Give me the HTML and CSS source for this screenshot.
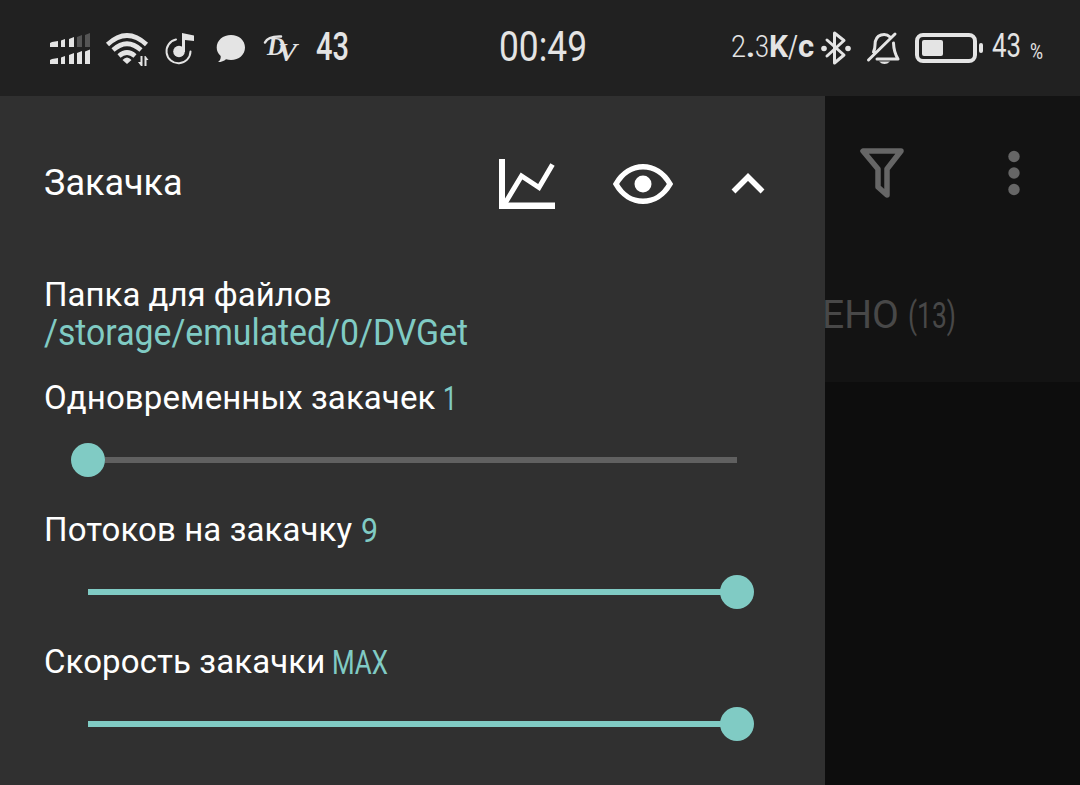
FILE: index.html
```html
<!DOCTYPE html>
<html lang="ru">
<head>
<meta charset="utf-8">
<title>DVGet</title>
<link rel="stylesheet" href="styles.css">
</head>
<body>
<header class="status">
  <div class="status-left">
    <svg class="signal" viewBox="50 0 41 96"><path d="M50 43l2-1 6-1v6h-8zM61 40.500l4-1.500v8h-4zM69 39l5-2v10h-5zM50 60l2-1 6-1v6h-8zM61 57.500l4-1.500v8h-4zM69 55l5-2v11h-5zM77 53l5-2v13h-5zM85 51.500l5-2V64h-5z"/><path class="weak" d="M77 37l5-2v12h-5zM85 35l5-2v14h-5z"/></svg>
    <svg class="wifi" viewBox="105 0 45 96"><g class="wave" stroke-width="4.600"><path d="M107.500 44.500Q127 26.500 146.500 44.500M113 50Q127 37.500 141 50M119 56Q127 49 135 56"/></g><path d="M122.500 60q4.500-5 9 0l-4.500 4zM142.500 56v10h-1.500l-3-4h2.500v-6zM144.500 66V56h1l3 4H146.500v6z"/></svg>
    <svg class="music" viewBox="166 0 30 96"><path class="line" stroke-width="2" d="M176 39.500A12 12 0 1 0 190.500 51.500"/><circle cx="179" cy="51.500" r="5.800"/><path d="M182 52V33l12 2.500v5.500l-9-1v12z"/></svg>
    <svg class="bubble" viewBox="216 0 30 96"><path d="M231 35c8 0 14 5.300 14 12.500S239 60 231 60q-2.500 0-5-.8Q223 62 218 62q3-2 2.700-6-4-3.500-4-8.500C216.700 40.300 223 35 231 35z"/></svg>
    <svg class="dv" viewBox="263 0 36 96"><path class="line" stroke-width="2.500" d="M265 42.500Q268 36 281 36.500"/><text class="logo" x="267" y="54.500" font-size="26" textLength="18" lengthAdjust="spacingAndGlyphs">D</text><text class="logo" x="278" y="60.500" font-size="26" textLength="19" lengthAdjust="spacingAndGlyphs">V</text></svg>
    <svg class="count" viewBox="315 0 35 96"><text class="medium" x="316" y="60" font-size="39" textLength="33" lengthAdjust="spacingAndGlyphs">43</text></svg>
  </div>
  <svg class="clock" viewBox="498 0 90 96"><text class="regular" x="499" y="61" font-size="42" textLength="88" lengthAdjust="spacingAndGlyphs">00:49</text></svg>
  <div class="status-right">
    <svg class="speed" viewBox="731 0 83 96"><text x="731" y="57" font-size="31"><tspan class="thin" textLength="15" lengthAdjust="spacingAndGlyphs">2</tspan><tspan class="bold">.</tspan><tspan class="thin" textLength="14" lengthAdjust="spacingAndGlyphs">3</tspan><tspan class="bold" textLength="19" lengthAdjust="spacingAndGlyphs">K</tspan><tspan class="regular" textLength="10" lengthAdjust="spacingAndGlyphs">/</tspan><tspan class="bold">c</tspan></text></svg>
    <svg class="bluetooth" viewBox="820 0 32 96"><path class="line" stroke-width="3" d="M827 40l17 15-9.500 8V33l9.500 7.500L827 56"/><circle cx="824" cy="48.500" r="2.800"/><circle cx="848" cy="48.500" r="2.800"/></svg>
    <svg class="bell" viewBox="866 0 35 96"><path class="line" stroke-width="3" d="M868.500 60L895 34M873.500 52q1.500-3 1.500-7c0-12 11-12 15-8M893.500 43q.3 9 4.500 16H877"/><path d="M879 61.500h11q-5.500 5-11 0z"/></svg>
    <svg class="battery" viewBox="914 0 70 96"><rect class="line" stroke-width="4" x="917" y="35" width="58" height="26" rx="6"/><rect x="922" y="40" width="21" height="16" rx="2"/><rect x="979" y="43" width="4" height="10" rx="2"/></svg>
    <svg class="level" viewBox="992 0 30 96"><text class="regular" x="992" y="57" font-size="33" textLength="29" lengthAdjust="spacingAndGlyphs">43</text></svg>
    <svg class="percent" viewBox="1030 0 14 96"><text class="regular" x="1030" y="59" font-size="22" textLength="13" lengthAdjust="spacingAndGlyphs">%</text></svg>
  </div>
</header>
<div class="screen">
  <main class="drawer">
    <section class="heading">
      <h1>Закачка</h1>
      <svg class="chart" viewBox="498 156 58 56"><path d="M499 159h6v43.500h50v6.500h-56z"/><path class="sharp" stroke-width="5" d="M504 205l17.500-29 17.500 11.500 13.500-23"/></svg>
      <svg class="eye" viewBox="612 156 62 56"><path class="sharp" stroke-width="5.500" d="M616 184C629 161 657 161 670 184C657 207 629 207 616 184z"/><circle cx="643" cy="184" r="8.500"/></svg>
      <svg class="chevron" viewBox="730 156 36 56"><path class="sharp" stroke-width="5.500" d="M733.500 191.500L748 177l14.500 14.500"/></svg>
    </section>
    <section class="folder">
      <div class="label">Папка для файлов</div>
      <svg class="path" viewBox="44 313 430 44"><text class="regular" x="44" y="345" font-size="37" textLength="424" lengthAdjust="spacingAndGlyphs">/storage/emulated/0/DVGet</text></svg>
    </section>
    <section class="setting">
      <div class="setting-label"><span class="label parallel">Одновременных закачек</span><svg class="value one" viewBox="0 0 14 60"><text class="regular" x="-2" y="42" font-size="33" textLength="14" lengthAdjust="spacingAndGlyphs">1</text></svg></div>
      <div class="slider minimum"><div class="track"></div><div class="thumb"></div></div>
    </section>
    <section class="setting">
      <div class="setting-label"><span class="label threads">Потоков на закачку</span><svg class="value nine" viewBox="0 0 18 60"><text class="regular" x="0" y="42" font-size="33" textLength="17" lengthAdjust="spacingAndGlyphs">9</text></svg></div>
      <div class="slider"><div class="track"></div><div class="thumb"></div></div>
    </section>
    <section class="setting">
      <div class="setting-label"><span class="label limit">Скорость закачки</span><svg class="value max" viewBox="0 0 58 60"><text class="regular" x="0" y="42" font-size="33" textLength="56" lengthAdjust="spacingAndGlyphs">MAX</text></svg></div>
      <div class="slider"><div class="track"></div><div class="thumb"></div></div>
    </section>
  </main>
  <aside class="behind">
    <div class="toolbar">
      <svg class="filter" viewBox="860 144 44 56"><path class="line" stroke-width="5.500" d="M863 151h38l-14 18v26l-9-8v-18z"/></svg>
      <svg class="more" viewBox="1007 144 14 56"><circle cx="1014" cy="156.500" r="5.700"/><circle cx="1014" cy="173" r="5.700"/><circle cx="1014" cy="189.500" r="5.700"/></svg>
    </div>
    <svg class="tab" viewBox="825 250 255 131"><text class="regular" x="822" y="328" font-size="39" textLength="77" lengthAdjust="spacingAndGlyphs">ЕНО</text><text class="regular" x="908" y="328" font-size="36" textLength="48" lengthAdjust="spacingAndGlyphs">(13)</text></svg>
  </aside>
</div>
</body>
</html>
```
FILE: styles.css
```css
* { box-sizing: border-box; }
body { margin: 0; width: 1080px; height: 785px; overflow: hidden; background: #0d0d0d; color: #fff; font-family: Roboto, sans-serif; }
svg { display: block; flex: none; fill: currentColor; overflow: visible; }
.line { fill: none; stroke: currentColor; stroke-linecap: round; stroke-linejoin: round; }
.wave { fill: none; stroke: currentColor; }
.sharp { fill: none; stroke: currentColor; stroke-linejoin: miter; }
.thin { font-weight: 300; }
.regular { font-weight: 400; }
.medium { font-weight: 500; }
.bold { font-weight: 700; }
.logo { font-family: "Liberation Serif", serif; font-style: italic; font-weight: 700; }

.status { display: flex; height: 96px; background: #212121; color: #e4e4e4; }
.status svg { height: 96px; }
.status-left, .status-right { display: flex; }
.status-left { width: 498px; padding-left: 50px; }
.status-right { margin-left: 143px; }
.signal { width: 41px; }
.weak { fill: #555; }
.wifi { width: 45px; margin-left: 14px; }
.music { width: 30px; margin-left: 16px; }
.bubble { width: 30px; margin-left: 20px; }
.dv { width: 36px; margin-left: 17px; }
.count { width: 35px; margin-left: 16px; }
.clock { width: 90px; }
.speed { width: 83px; }
.bluetooth { width: 32px; margin-left: 6px; }
.bell { width: 35px; margin-left: 14px; }
.battery { width: 70px; margin-left: 13px; }
.level { width: 30px; margin-left: 8px; }
.percent { width: 14px; margin-left: 8px; }

.screen { display: flex; height: 689px; }
.drawer { width: 825px; background: #303030; }
.heading { display: flex; align-items: center; height: 174px; padding: 0 59px 0 44px; }
h1 { margin: 0; flex: 1; font-size: 36px; font-weight: 400; }
.heading svg { height: 56px; margin-top: 2px; }
.chart { width: 58px; }
.eye { width: 62px; margin-left: 56px; }
.chevron { width: 36px; margin-left: 56px; }
.label { font-size: 33px; line-height: 36px; white-space: nowrap; letter-spacing: 0.1px; }
.folder { height: 98px; padding: 7px 0 0 44px; }
.folder .label { letter-spacing: 0; }
.path { width: 430px; height: 44px; color: #80cbc4; }
.setting { height: 132px; }
.setting-label { display: flex; align-items: center; height: 60px; padding-left: 44px; }
.parallel { width: 401px; }
.threads { width: 317px; }
.limit { width: 288px; }
.value { height: 60px; color: #80cbc4; }
.one { width: 14px; }
.nine { width: 18px; }
.max { width: 58px; }
.slider { display: flex; align-items: center; height: 64px; padding-left: 88px; color: #80cbc4; }
.track { width: 649px; height: 6px; background: currentColor; }
.thumb { width: 34px; height: 34px; margin-left: -17px; border-radius: 50%; background: currentColor; }
.minimum { padding-left: 71px; }
.minimum .thumb { order: -1; margin: 0; }
.minimum .track { width: 632px; background: #606060; }

.behind { width: 255px; height: 286px; background: #131313; overflow: hidden; }
.toolbar { display: flex; align-items: center; height: 154px; padding: 0 0 2px 35px; color: #666; }
.toolbar svg { height: 56px; }
.filter { width: 44px; }
.more { width: 14px; margin-left: 103px; }
.tab { width: 255px; height: 131px; color: #484848; }
```
